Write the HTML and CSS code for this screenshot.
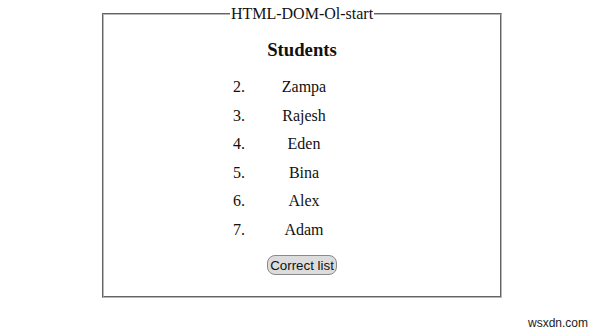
FILE: index.html
```html
<!DOCTYPE html>
<html lang="en">
<head>
    <meta charset="UTF-8">
    <meta name="viewport" content="width=device-width, initial-scale=1.0">
    <title>HTML DOM Ol start</title>
    <link rel="stylesheet" href="styles.css">
</head>
<body>
    <fieldset>
        <legend>HTML-DOM-Ol-start</legend>
        <h3>Students</h3>
        <ol id="students" start="2">
            <li>Zampa</li>
            <li>Rajesh</li>
            <li>Eden</li>
            <li>Bina</li>
            <li>Alex</li>
            <li>Adam</li>
        </ol>
        <div class="actions">
            <button id="fixBtn" onclick="correctList()">Correct list</button>
        </div>
    </fieldset>
    <div class="watermark">wsxdn.com</div>

    <script>
        function correctList() {
            document.getElementById('students').start = 1;
        }
    </script>
</body>
</html>
```

FILE: styles.css
```css
body {
    margin: 0;
    font-family: "Liberation Serif", "Times New Roman", serif;
    font-size: 16px;
    color: #111;
    background: #fff;
}
fieldset {
    width: 372px;
    margin: 5px 0 0 102px;
    padding: 0 12px 21px;
    border: 2px groove #b8b8b8;
    text-align: center;
}
legend {
    margin: 0 auto;
    padding: 0 1px;
    line-height: 18px;
}
h3 {
    font-size: 18.72px;
    margin: 16px 0 12px;
}
ol {
    width: 110px;
    margin: 0 auto;
    padding: 0 0 0 4px;
}
li {
    line-height: 18.5px;
    padding: 5px 0;
}
.actions {
    margin-top: 11px;
}
button {
    font-family: "Liberation Sans", Arial, sans-serif;
    font-size: 13.33px;
    padding: 1px 2px;
    height: 20px;
    border: 1px solid #8a8a8a;
    border-radius: 8px;
    background: #dcdcdc;
    color: #111;
}
.watermark {
    position: absolute;
    right: 12px;
    bottom: 2px;
    font-family: "Liberation Sans", Arial, sans-serif;
    font-size: 12px;
    color: #222;
}
```
